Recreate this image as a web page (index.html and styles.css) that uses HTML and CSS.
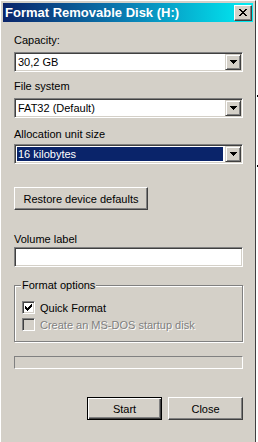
FILE: index.html
```html
<!DOCTYPE html>
<html lang="en">
  <head>
    <meta charset="UTF-8" />
    <title>Format Removable Disk (H:)</title>
    <link rel="stylesheet" href="styles.css">
  </head>
  <body>
    <div class="window">
      <div class="titlebar">
        <span class="title">Format Removable Disk (H:)</span>
        <button class="close" title="Close">
          <svg width="8" height="7" viewBox="0 0 8 7" shape-rendering="crispEdges">
            <path d="M0 0h2v1H0zM6 0h2v1H6zM1 1h2v1H1zM5 1h2v1H5zM2 2h4v1H2zM3 3h2v1H3zM2 4h4v1H2zM1 5h2v1H1zM5 5h2v1H5zM0 6h2v1H0zM6 6h2v1H6z" fill="#000"/>
          </svg>
        </button>
      </div>

      <div class="content">
        <div class="label first">Capacity:</div>
        <div class="combo">
          <span class="value">30,2 GB</span>
          <span class="drop">
            <svg width="7" height="4" viewBox="0 0 7 4" shape-rendering="crispEdges"><path d="M0 0h7v1H0zM1 1h5v1H1zM2 2h3v1H2zM3 3h1v1H3z" fill="#000"/></svg>
          </span>
        </div>

        <div class="label second">File system</div>
        <div class="combo">
          <span class="value">FAT32 (Default)</span>
          <span class="drop">
            <svg width="7" height="4" viewBox="0 0 7 4" shape-rendering="crispEdges"><path d="M0 0h7v1H0zM1 1h5v1H1zM2 2h3v1H2zM3 3h1v1H3z" fill="#000"/></svg>
          </span>
        </div>

        <div class="label third">Allocation unit size</div>
        <div class="combo focused">
          <span class="value">16 kilobytes</span>
          <span class="drop">
            <svg width="7" height="4" viewBox="0 0 7 4" shape-rendering="crispEdges"><path d="M0 0h7v1H0zM1 1h5v1H1zM2 2h3v1H2zM3 3h1v1H3z" fill="#000"/></svg>
          </span>
        </div>

        <button class="btn restore">Restore device defaults</button>

        <div class="label volume">Volume label</div>
        <div class="textbox"></div>

        <fieldset class="group">
          <legend>Format options</legend>
          <div class="check first-check">
            <span class="box">
              <svg width="7" height="7" viewBox="0 0 7 7" shape-rendering="crispEdges"><path d="M6 0h1v1H6zM5 1h2v1H5zM0 2h1v1H0zM4 2h3v1H4zM0 3h2v1H0zM3 3h3v1H3zM0 4h5v1H0zM1 5h3v1H1zM2 6h1v1H2z" fill="#000"/></svg>
            </span>
            <span>Quick Format</span>
          </div>
          <div class="check disabled">
            <span class="box"></span>
            <span>Create an MS-DOS startup disk</span>
          </div>
        </fieldset>

        <div class="progress"></div>

        <div class="actions">
          <button class="btn default">Start</button>
          <button class="btn">Close</button>
        </div>
      </div>
    </div>

    <div class="behind">
      <span class="mark top-mark"></span>
      <span class="mark bottom-mark"></span>
    </div>
  </body>
</html>
```

FILE: styles.css
```css
body {
  margin: 0;
  background-color: #fff;
  font-family: "Liberation Sans", Arial, sans-serif;
  font-size: 11px;
  color: #000;
  display: flex;
  align-items: flex-start;
}

.window {
  width: 256px;
  height: 442px;
  box-sizing: border-box;
  flex-shrink: 0;
  background-color: #d4d0c8;
  border-top: 1px solid #fff;
  border-left: 1px solid #fff;
  border-right: 1px solid #404040;
  padding: 2px 2px 0 2px;
}

.titlebar {
  height: 19px;
  display: flex;
  align-items: center;
  justify-content: space-between;
  padding-left: 2px;
  background: linear-gradient(to right, #0a246a 0%, #0a7fb4 50%, #00eef4 100%);
}

.title {
  color: #fff;
  font-weight: bold;
  font-size: 13px;
}

.close {
  width: 18px;
  height: 16px;
  margin-right: 1px;
  padding: 0;
  display: flex;
  align-items: center;
  justify-content: center;
  background-color: #d4d0c8;
  border: 1px solid;
  border-color: #fff #404040 #404040 #fff;
  box-shadow: inset -1px -1px #808080;
}

.content {
  padding: 0 10px 0 11px;
}

.label {
  line-height: 13px;
}

.label.first {
  margin-top: 12px;
}

.label.second {
  margin-top: 8px;
}

.label.third {
  margin-top: 10px;
}

.label.volume {
  margin-top: 23px;
}

.combo {
  height: 20px;
  box-sizing: border-box;
  margin-top: 5px;
  padding: 1px;
  display: flex;
  align-items: stretch;
  background-color: #fff;
  border: 1px solid;
  border-color: #808080 #fff #fff #808080;
  box-shadow: inset 1px 1px #404040, inset -1px -1px #d4d0c8;
}

.label.third + .combo {
  margin-top: 3px;
}

.combo .value {
  flex: 1;
  display: flex;
  align-items: center;
  padding-left: 2px;
  margin-right: 1px;
}

.combo.focused .value {
  background-color: #0a246a;
  color: #fff;
  margin: 1px 2px 1px 1px;
  padding-left: 1px;
}

.drop {
  width: 16px;
  box-sizing: border-box;
  display: flex;
  align-items: center;
  justify-content: center;
  background-color: #d4d0c8;
  border: 1px solid;
  border-color: #d4d0c8 #404040 #404040 #d4d0c8;
  box-shadow: inset 1px 1px #fff, inset -1px -1px #808080;
}

.btn {
  height: 23px;
  padding: 0;
  font-family: inherit;
  font-size: 11px;
  color: #000;
  background-color: #d4d0c8;
  border: 1px solid;
  border-color: #fff #404040 #404040 #fff;
  box-shadow: inset -1px -1px #808080;
}

.btn.restore {
  display: block;
  width: 134px;
  margin-top: 23px;
}

.textbox {
  height: 20px;
  box-sizing: border-box;
  margin-top: 1px;
  background-color: #fff;
  border: 1px solid;
  border-color: #808080 #fff #fff #808080;
  box-shadow: inset 1px 1px #404040, inset -1px -1px #d4d0c8;
}

.group {
  margin: 12px 0 0;
  padding: 0 0 10px 6px;
  border: 1px solid #808080;
  box-shadow: inset 1px 1px #fff, 1px 1px #fff;
}

.group legend {
  padding: 0 1px;
  line-height: 13px;
  background-color: #d4d0c8;
}

.check {
  display: flex;
  align-items: center;
  gap: 5px;
  height: 13px;
  margin: 4px 0 0 1px;
}

.check.first-check {
  margin-top: 9px;
}

.check .box {
  width: 13px;
  height: 13px;
  box-sizing: border-box;
  display: flex;
  align-items: center;
  justify-content: center;
  background-color: #fff;
  border: 1px solid;
  border-color: #808080 #fff #fff #808080;
  box-shadow: inset 1px 1px #404040, inset -1px -1px #d4d0c8;
}

.check.disabled {
  color: #808080;
  text-shadow: 1px 1px #fff;
}

.check.disabled .box {
  background-color: #d4d0c8;
}

.progress {
  height: 13px;
  box-sizing: border-box;
  margin-top: 14px;
  border: 1px solid;
  border-color: #808080 #fff #fff #808080;
}

.actions {
  display: flex;
  justify-content: flex-end;
  gap: 6px;
  margin-top: 28px;
}

.actions .btn {
  width: 75px;
}

.btn.default {
  border-color: #000;
  box-shadow: inset 1px 1px #fff, inset -1px -1px #404040, inset -2px -2px #808080;
}

.behind {
  width: 2px;
  display: flex;
  flex-direction: column;
  align-items: flex-end;
}

.mark {
  width: 1px;
  height: 2px;
  background-color: #000;
}

.top-mark {
  margin-top: 95px;
}

.bottom-mark {
  margin-top: 68px;
}
```
